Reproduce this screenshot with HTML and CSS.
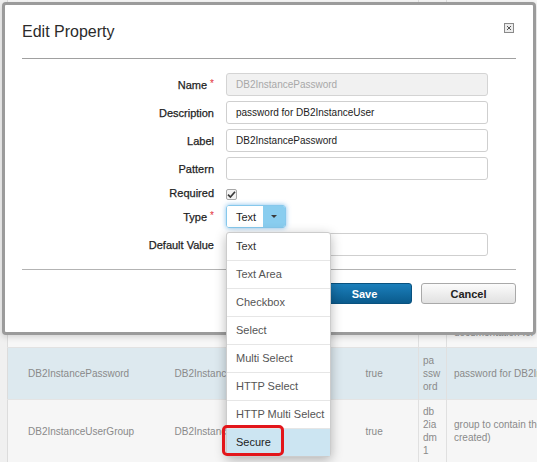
FILE: index.html
```html
<!DOCTYPE html>
<html>
<head>
<meta charset="utf-8">
<title>Edit Property</title>
<link rel="stylesheet" href="styles.css">
</head>
<body>
<div class="page">
  <table class="grid">
    <colgroup>
      <col class="c1"><col class="c2"><col class="c3"><col class="c4"><col class="c5">
    </colgroup>
    <tr class="row-top">
      <td></td><td></td><td></td><td class="narrow"></td>
      <td class="desc bottom">documentation for</td>
    </tr>
    <tr class="row-sel">
      <td class="first">DB2InstancePassword</td>
      <td class="second">DB2InstancePassword</td>
      <td class="third">true</td>
      <td class="narrow">pa<br>ssw<br>ord</td>
      <td class="desc">password for DB2InstanceUser</td>
    </tr>
    <tr class="row-alt">
      <td class="first">DB2InstanceUserGroup</td>
      <td class="second">DB2InstanceUserGroup</td>
      <td class="third">true</td>
      <td class="narrow">db<br>2ia<br>dm<br>1</td>
      <td class="desc">group to contain the instance user (will be<br>created)</td>
    </tr>
  </table>
</div>

<div class="modal">
  <div class="modal-header">
    <h1 class="modal-title">Edit Property</h1>
    <span class="close-btn">
      <svg width="10" height="10" viewBox="0 0 10 10"><rect x="0.5" y="0.5" width="9" height="9" fill="#ececec" stroke="#8a8a8a"/><path d="M3 3 L7 7 M7 3 L3 7" stroke="#555" stroke-width="1"/></svg>
    </span>
  </div>
  <div class="form">
    <label class="lbl">Name<span class="req">*</span></label>
    <div class="field input disabled">DB2InstancePassword</div>

    <label class="lbl">Description</label>
    <div class="field input">password for DB2InstanceUser</div>

    <label class="lbl">Label</label>
    <div class="field input">DB2InstancePassword</div>

    <label class="lbl">Pattern</label>
    <div class="field input"></div>

    <label class="lbl">Required</label>
    <div class="field check-wrap">
      <span class="checkbox">
        <svg width="9" height="9" viewBox="0 0 9 9"><path d="M1 4.6 L3.4 7 L8 1.8" fill="none" stroke="#3a3a3a" stroke-width="1.7"/></svg>
      </span>
    </div>

    <label class="lbl">Type<span class="req">*</span></label>
    <div class="field">
      <div class="select">
        <span class="select-value">Text</span>
        <span class="select-btn"><span class="caret"></span></span>
      </div>
    </div>

    <label class="lbl">Default Value</label>
    <div class="field input"></div>
  </div>
  <div class="modal-footer">
    <button class="btn btn-primary">Save</button>
    <button class="btn btn-default">Cancel</button>
  </div>
</div>

<ul class="menu">
  <li class="menu-item first-item">Text</li>
  <li class="menu-item">Text Area</li>
  <li class="menu-item">Checkbox</li>
  <li class="menu-item">Select</li>
  <li class="menu-item">Multi Select</li>
  <li class="menu-item">HTTP Select</li>
  <li class="menu-item">HTTP Multi Select</li>
  <li class="menu-item active">Secure</li>
</ul>
<div class="callout"></div>
</body>
</html>
```
FILE: styles.css
```css
html, body {
  margin: 0;
  padding: 0;
  overflow: hidden;
  width: 537px;
  height: 462px;
}
body {
  background: #f0f0f0;
  font-family: "Liberation Sans", Arial, sans-serif;
  position: relative;
}

/* background table */
.page {
  padding-left: 7px;
}
.grid {
  border-collapse: collapse;
  table-layout: fixed;
  width: 760px;
  border-left: 1px solid #dcdcdc;
  font-size: 10px;
  color: #8a8a8a;
}
.c1 { width: 147px; }
.c2 { width: 185px; }
.c3 { width: 79px; }
.c4 { width: 28px; }
.c5 { width: 321px; }
.grid td {
  padding: 0;
  vertical-align: middle;
  line-height: 13px;
  white-space: nowrap;
  overflow: hidden;
}
.row-top { height: 347px; background: #f7f7f7; border-bottom: 1px solid #e2e2e2; }
.row-sel { height: 52px; background: #dde9ef; }
.row-alt { height: 64px; background: #f6f6f6; border-top: 1px solid #e4e4e4; }
.grid td.first { padding-left: 20px; }
.grid td.second { padding-left: 20px; }
.grid td.third { padding-left: 26px; }
.grid td.narrow {
  padding-left: 4px;
  border-left: 1px solid #e0e0e0;
  border-right: 1px solid #e0e0e0;
}
.grid td.desc { padding-left: 7px; }
.grid td.bottom { vertical-align: bottom; padding-bottom: 8px; }

/* modal */
.modal {
  position: absolute;
  left: 2px;
  top: 2px;
  width: 534px;
  height: 333px;
  box-sizing: border-box;
  background: #fff;
  border: 3px solid #9b9b9b;
  border-radius: 4px;
  padding: 0 17px;
  box-shadow: 0 2px 6px rgba(0,0,0,0.15);
}
.modal-header {
  display: flex;
  justify-content: space-between;
  align-items: flex-start;
  padding: 17px 0 16px 0;
  border-bottom: 1px solid #a0a0a0;
}
.modal-title {
  margin: 0;
  font-size: 16px;
  line-height: 20px;
  font-weight: normal;
  color: #2b2b2b;
}
.close-btn {
  display: block;
  width: 10px;
  height: 10px;
  margin-top: 1px;
  margin-right: 2px;
}
.close-btn svg { display: block; }

.form {
  display: grid;
  grid-template-columns: 192px 262px;
  grid-template-rows: 23px 23px 23px 23px 15px 23px 23px;
  column-gap: 12px;
  row-gap: 5px;
  padding: 14px 0 13px 0;
}
.lbl {
  display: flex;
  justify-content: flex-end;
  align-items: center;
  font-size: 11px;
  color: #1e1e1e;
  -webkit-text-stroke: 0.25px #1e1e1e;
}
.req {
  color: #e2303a;
  font-size: 10px;
  align-self: flex-start;
  margin-top: 5px;
  margin-left: 3px;
  -webkit-text-stroke: 0;
}
.field {
  display: flex;
  align-items: center;
}
.input {
  box-sizing: border-box;
  height: 23px;
  border: 1px solid #cfcfcf;
  border-radius: 3px;
  padding-left: 9px;
  font-size: 10px;
  color: #222;
  background: #fff;
}
.input.disabled {
  background: #f1f1f1;
  color: #a8a8a8;
  border-color: #d4d4d4;
}
.check-wrap { align-items: center; }
.checkbox {
  box-sizing: border-box;
  width: 11px;
  height: 11px;
  border: 1px solid #a8a8a8;
  border-radius: 2px;
  background: #f3f3f3;
  display: flex;
  align-items: center;
  justify-content: center;
  margin-top: 3px;
}
.checkbox svg { display: block; }

.select {
  box-sizing: border-box;
  width: 60px;
  height: 23px;
  display: flex;
  border: 1px solid #86c8ec;
  border-radius: 3px;
  box-shadow: 0 0 5px rgba(90,170,230,0.75);
  overflow: hidden;
}
.select-value {
  flex: 1;
  display: flex;
  align-items: center;
  padding-left: 9px;
  font-size: 11px;
  color: #1e1e1e;
  background: #fff;
}
.select-btn {
  width: 22px;
  background: #89cdef;
  display: flex;
  align-items: center;
  justify-content: center;
}
.caret {
  width: 0;
  height: 0;
  border-left: 3px solid transparent;
  border-right: 3px solid transparent;
  border-top: 3px solid #3a3a3a;
}

.modal-footer {
  display: flex;
  justify-content: flex-end;
  gap: 9px;
  border-top: 1px solid #b3b3b3;
  padding-top: 13px;
}
.btn {
  box-sizing: border-box;
  width: 95px;
  height: 21px;
  border-radius: 3px;
  font-family: "Liberation Sans", Arial, sans-serif;
  font-size: 11px;
  font-weight: bold;
  padding: 0;
  margin: 0;
}
.btn-primary {
  background: linear-gradient(#1b7fbb, #0a5b8d);
  border: 1px solid #09527f;
  color: #fff;
}
.btn-default {
  background: linear-gradient(#fbfbfb, #e1e1e1);
  border: 1px solid #a9a9a9;
  color: #222;
}

/* dropdown */
.menu {
  position: absolute;
  left: 226px;
  top: 232px;
  width: 105px;
  box-sizing: border-box;
  margin: 0;
  padding: 0;
  list-style: none;
  background: #fff;
  border: 1px solid #cccccc;
  border-radius: 3px;
  box-shadow: 0 3px 12px rgba(0,0,0,0.28);
}
.menu-item {
  height: 27px;
  line-height: 27px;
  padding-left: 9px;
  font-size: 11px;
  color: #555;
  border-bottom: 1px solid #e6e6e6;
  white-space: nowrap;
}
.menu-item.first-item { color: #333; }
.menu-item.active {
  background: #cce5f2;
  border-bottom: none;
  color: #222;
}
.callout {
  position: absolute;
  left: 222px;
  top: 425px;
  width: 62px;
  height: 31px;
  box-sizing: border-box;
  border: 3px solid #e3161b;
  border-radius: 5px;
}
```
